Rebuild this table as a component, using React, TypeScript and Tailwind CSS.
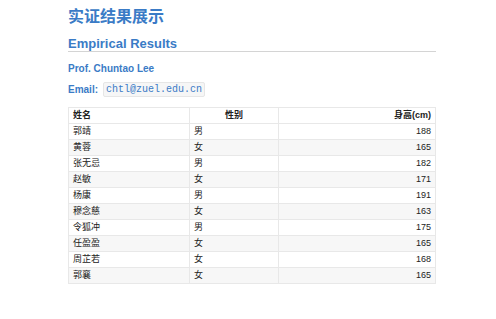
const ROWS = [
  { name: "郭靖", sex: "男", height: 188 },
  { name: "黄蓉", sex: "女", height: 165 },
  { name: "张无忌", sex: "男", height: 182 },
  { name: "赵敏", sex: "女", height: 171 },
  { name: "杨康", sex: "男", height: 191 },
  { name: "穆念慈", sex: "女", height: 163 },
  { name: "令狐冲", sex: "男", height: 175 },
  { name: "任盈盈", sex: "女", height: 165 },
  { name: "周芷若", sex: "女", height: 168 },
  { name: "郭襄", sex: "女", height: 165 },
];

export default function App() {
  return (
    <div
      className="min-h-screen bg-white"
      style={{ fontFamily: '"Liberation Sans", "Noto Sans CJK SC", sans-serif' }}
    >
      <div className="ml-[68px] w-[368px] pt-[7px]">
        <h1 className="text-[16px] leading-[20px] font-bold text-[#3a7bc6]">实证结果展示</h1>
        <h2 className="mt-[9px] border-b border-[#d4d4d4] pb-0 text-[13px] leading-[15px] font-bold text-[#3a7bc6]">
          Empirical Results
        </h2>
        <p className="mt-[11px] text-[10px] leading-[12px] font-bold text-[#3a7bc6]">Prof. Chuntao Lee</p>
        <p className="mt-[7px] flex items-center gap-[5px] text-[10px] leading-[12px] font-bold text-[#3a7bc6]">
          <span>Email:</span>
          <code className="rounded-[2px] border border-[#e6e6e6] bg-[#f6f6f6] px-[2px] py-px font-['Liberation_Mono',monospace] text-[10px] leading-[11px] font-normal">
            chtl@zuel.edu.cn
          </code>
        </p>

        <table className="mt-[10px] w-full border-collapse text-[9px] leading-[15px] text-[#222]">
          <thead>
            <tr>
              <th className="w-[121px] border border-[#e8e8e8] px-[4px] text-left font-bold">姓名</th>
              <th className="w-[89px] border border-[#e8e8e8] px-[4px] text-center font-bold">性别</th>
              <th className="border border-[#e8e8e8] px-[4px] text-right font-bold">身高(cm)</th>
            </tr>
          </thead>
          <tbody>
            {ROWS.map((r, i) => (
              <tr key={r.name + i} className={i % 2 === 1 ? "bg-[#f7f7f7]" : "bg-white"}>
                <td className="border border-[#e8e8e8] px-[4px]">{r.name}</td>
                <td className="border border-[#e8e8e8] px-[4px]">{r.sex}</td>
                <td className="border border-[#e8e8e8] px-[4px] text-right">{r.height}</td>
              </tr>
            ))}
          </tbody>
        </table>
      </div>
    </div>
  );
}
